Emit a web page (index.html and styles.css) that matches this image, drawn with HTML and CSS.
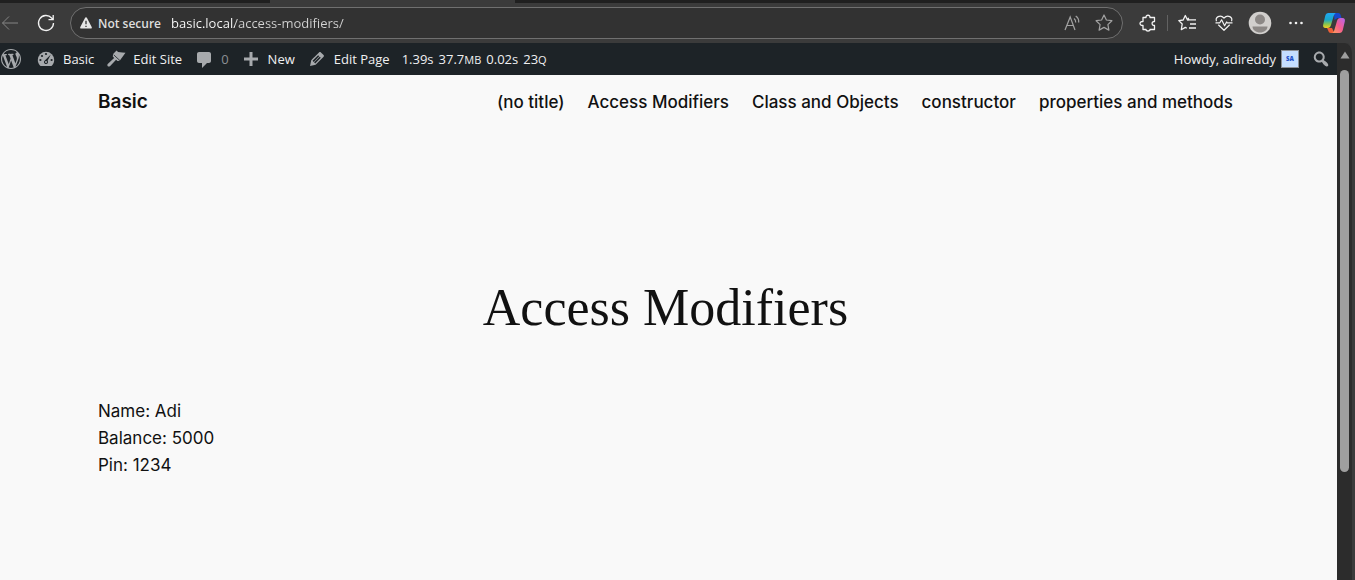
FILE: index.html
```html
<!DOCTYPE html>
<html lang="en">
<head>
<meta charset="utf-8">
<title>Access Modifiers – Basic</title>
<link rel="stylesheet" href="styles.css">
</head>
<body>
<div class="tabstrip"><span class="tab-active"></span></div>
<div class="toolbar">
  <button class="tool back" aria-label="Back"><svg width="20" height="20" viewBox="0 0 20 20"><path d="M18 10H2.500M9 3.500L2.500 10l6.500 6.500" stroke="#858585"/></svg></button>
  <button class="tool reload" aria-label="Refresh"><svg width="20" height="20" viewBox="0 0 20 20"><path d="M17.500 10A7.500 7.500 0 1 1 15.600 5l1.400 1.500M17.200 2v4.700h-4.700" stroke="#f2f2f2" stroke-width="1.300"/></svg></button>
  <div class="address">
    <button class="security"><svg width="14" height="14" viewBox="0 0 14 14"><path d="M7 1.200c.5 0 .8.300 1 .7l4.700 9c.4.800 0 1.700-1 1.700H2.300c-1 0-1.400-.9-1-1.700l4.700-9c.2-.4.500-.7 1-.7z" fill="#e6e6e6" stroke="none"/><path d="M7 4.700v3.600M7 9.700v1.200" stroke="#333" stroke-width="1.300"/></svg>Not secure</button>
    <input class="url" type="text" aria-label="Address" value="basic.local/access-modifiers/">
    <button class="tool read" aria-label="Read aloud"><svg width="20" height="20" viewBox="0 0 20 20"><path d="M3 17L8.200 4 13 17M5 12.500h6.300M12 5.500c1.300 1 1.800 2.400 1.700 4M13.700 3c2.300 1.500 3.300 3.700 3 6.500" stroke="#a2a2a2" stroke-width="1.200"/></svg></button>
    <button class="tool" aria-label="Add to favorites"><svg width="20" height="20" viewBox="0 0 20 20"><path d="M10 2l2.400 5 5.500.7-4 3.900 1 5.500-4.900-2.700-4.900 2.700 1-5.500-4-3.900 5.500-.7z" stroke="#a2a2a2" stroke-width="1.200" stroke-linejoin="round"/></svg></button>
  </div>
  <button class="tool extensions" aria-label="Extensions"><svg width="20" height="20" viewBox="0 0 20 20"><path d="M5 4.500h3c-.3-3 4.300-3 4 0h4.500v4c-3.200-.2-3.200 4.300 0 4v4H12c.2 2-4.200 2-4 0H5v-4c-4 .4-4-4.400 0-4z" stroke="#f2f2f2" stroke-width="1.300" stroke-linejoin="round"/></svg></button>
  <span class="divider"></span>
  <button class="tool" aria-label="Favorites"><svg width="20" height="20" viewBox="0 0 20 20"><path d="M11.500 6.800L9.500 7 7.300 2.500 5.200 7l-4.400.6L4.200 11l-.9 5.700 4-2.300 1.500.8M10 4.800l.9 2H18M12 11h6M11 15h7" stroke="#f2f2f2" stroke-width="1.300" stroke-linejoin="round"/></svg></button>
  <button class="tool" aria-label="Browser essentials"><svg width="20" height="20" viewBox="0 0 20 20"><path d="M2.500 8.200C1 4.500 6 .8 10 5c4-4.200 9-.5 7.500 3.200M4.300 11.700l5.700 5.600 5.700-5.600M1.500 9.800h4.300l1.800-3 3 6 2-3.800.7.800h5.200" stroke="#f2f2f2" stroke-width="1.200" stroke-linejoin="round"/></svg></button>
  <button class="tool profile" aria-label="Profile"><svg width="24" height="24" viewBox="0 0 24 24" stroke="none"><circle cx="12" cy="12" r="11.300" fill="#d1cfcd"/><circle cx="12" cy="8.500" r="5" fill="#8c8886"/><path d="M4.500 15.500h15c0 3.500-3.500 6-7.500 6s-7.500-2.500-7.500-6z" fill="#8c8886"/></svg></button>
  <button class="tool more" aria-label="Settings and more"><svg width="20" height="20" viewBox="0 0 20 20"><g fill="#f2f2f2"><circle cx="4.500" cy="10" r="1.300"/><circle cx="10" cy="10" r="1.300"/><circle cx="15.500" cy="10" r="1.300"/></g></svg></button>
  <button class="tool copilot" aria-label="Copilot"><svg width="24" height="24" viewBox="0 0 24 24" stroke="none">
    <defs>
      <linearGradient id="cool" x1="0" y1="0" x2="0" y2="1"><stop offset="0" stop-color="#20a7f5"/><stop offset=".45" stop-color="#19a7c9"/><stop offset=".75" stop-color="#8bc64a"/><stop offset="1" stop-color="#f5cf21"/></linearGradient>
      <linearGradient id="warm" x1="1" y1="0" x2="0" y2="1"><stop offset="0" stop-color="#b365ef"/><stop offset=".5" stop-color="#f55d91"/><stop offset="1" stop-color="#ff9e55"/></linearGradient>
    </defs>
    <path d="M12 2h4.200c1.600 0 2.200 1 2.600 2.400L19.500 7h-4l-3 2z" fill="#1748ce"/>
    <path d="M6.500 2H14c-1.500.5-2 2-2.500 3.600L9 14c-.6 1.900-1.500 3-3.500 3H3.600C1.400 17 .7 15.500 1.200 13.500l2-8.500c.5-2 1.500-3 3.300-3z" fill="url(#cool)"/>
    <path d="M5 17h5l2.500 5H9c-1.500 0-2.300-1-2.700-2.300z" fill="#ee6038"/>
    <path d="M17.500 22H10c1.500-.5 2-2 2.500-3.600L15 10c.6-1.900 1.500-3 3.500-3h1.900c2.200 0 2.900 1.500 2.400 3.500l-2 8.500c-.5 2-1.500 3-3.300 3z" fill="url(#warm)"/>
  </svg></button>
</div>
<div class="window">
  <div class="viewport">
    <nav class="adminbar" aria-label="Toolbar">
      <a class="item logo" href="#" aria-label="About WordPress"><svg width="20" height="20" viewBox="0 0 20 20"><path d="M20 10c0-5.510-4.490-10-10-10C4.480 0 0 4.490 0 10c0 5.520 4.480 10 10 10 5.510 0 10-4.480 10-10zM7.780 15.370L4.370 6.220c.55-.02 1.170-.08 1.170-.08.5-.06.44-1.130-.06-1.110 0 0-1.450.11-2.370.11-.18 0-.37 0-.58-.01C4.120 2.690 6.870 1.110 10 1.110c2.330 0 4.450.87 6.050 2.340-.68-.11-1.650.39-1.650 1.580 0 .74.45 1.360.9 2.100.35.610.55 1.360.55 2.460 0 1.490-1.400 5-1.400 5l-3.030-8.370c.54-.02.82-.17.82-.17.5-.05.44-1.250-.06-1.220 0 0-1.440.12-2.380.12-.87 0-2.330-.12-2.330-.12-.5-.03-.56 1.200-.06 1.220l.92.08 1.260 3.410zM17.410 10c.24-.64.74-1.870.43-4.250.7 1.290 1.050 2.710 1.050 4.250 0 3.290-1.730 6.240-4.400 7.780.97-2.590 1.940-5.200 2.920-7.780zM6.100 18.090C3.120 16.650 1.110 13.530 1.110 10c0-1.300.23-2.480.72-3.590C3.250 10.300 4.670 14.200 6.100 18.090zm4.030-6.630l2.580 6.980c-.86.29-1.760.45-2.710.45-.79 0-1.570-.11-2.290-.33.81-2.380 1.620-4.740 2.420-7.100z"/></svg></a>
      <a class="item" href="#"><svg width="20" height="20" viewBox="0 0 20 20"><path d="M4.500 17h11c1.700-1.500 2.700-3.600 2.700-6A8.200 8.200 0 0 0 1.800 11c0 2.400 1 4.500 2.700 6z"/><g fill="#1d2327"><circle cx="10" cy="5" r="1.100"/><circle cx="6" cy="7" r="1.100"/><circle cx="4.400" cy="11" r="1.100"/><circle cx="15.600" cy="11" r="1.100"/><path d="M14.800 5.500l-3.200 6.300c1 1.400.2 3.200-1.600 3.200-2 0-2.700-2.400-1.200-3.500z"/></g><circle cx="10" cy="13" r="1"/></svg>Basic</a>
      <a class="item" href="#"><svg width="20" height="20" viewBox="0 0 20 20"><path d="M10.500 1.500l1.600 1.600 4.200.4 3.200.3-5.800 8-2.300.2-1.300-1.300-5.900 6.200c-.8.800-1.700.9-2.400.3-.7-.7-.6-1.600.2-2.400l6.100-5.900L6.800 7.600l.3-2.700z"/><path d="M7.700 5.800l6.500 6" stroke="#1d2327" stroke-width=".8"/></svg>Edit Site</a>
      <a class="item muted" href="#" aria-label="0 comments"><svg width="20" height="20" viewBox="0 0 20 20"><path d="M5 3h10c1.100 0 2 .9 2 2v7c0 1.100-.9 2-2 2h-2l-5 5v-5H5c-1.100 0-2-.9-2-2V5c0-1.100.9-2 2-2z"/></svg>0</a>
      <a class="item" href="#"><svg width="20" height="20" viewBox="0 0 20 20"><path d="M17 8.500v3h-5.500V17h-3v-5.500H3v-3h5.500V3h3v5.500z"/></svg>New</a>
      <a class="item" href="#"><svg width="20" height="20" viewBox="0 0 20 20"><path d="M13.890 3.390l2.710 2.720c.46.46.42 1.240.03 1.640l-8.010 8.020-5.560 1.160 1.160-5.580s7.600-7.630 7.990-8.030c.39-.39 1.220-.39 1.680.07zm-2.730 2.790l-5.590 5.610 1.110 1.110 5.540-5.650zm-2.970 8.230l5.580-5.600-1.070-1.080-5.590 5.600z"/></svg>Edit Page</a>
      <a class="item stats" href="#"><span>1.39s</span><span>37.7<small>MB</small></span><span>0.02s</span><span>23<small>Q</small></span></a>
      <a class="item account" href="#">Howdy, adireddy<span class="avatar">SA</span></a>
      <button class="search" aria-label="Search"><svg width="20" height="20" viewBox="0 0 20 20"><path d="M12.140 4.180c1.870 1.870 2.110 4.750.72 6.890.12.1.22.21.36.31.2.16.47.36.81.59.34.24.56.39.66.47.42.31.73.57.94.78.32.32.6.65.84 1 .25.35.44.69.59 1.040.14.35.21.68.18 1-.02.32-.14.59-.36.81s-.49.34-.81.36c-.31.02-.65-.04-.99-.19-.35-.14-.7-.34-1.040-.59-.35-.24-.68-.52-1-.84-.21-.21-.47-.52-.77-.93-.1-.13-.25-.35-.47-.66-.22-.32-.4-.57-.56-.78-.16-.2-.29-.35-.44-.5-2.070 1.090-4.690.76-6.440-.98-2.140-2.150-2.140-5.640 0-7.780 2.150-2.150 5.630-2.150 7.780 0zm-1.410 6.360c1.360-1.370 1.360-3.580 0-4.950-1.370-1.370-3.590-1.370-4.950 0-1.370 1.370-1.370 3.580 0 4.950 1.360 1.370 3.580 1.370 4.950 0z"/></svg></button>
    </nav>
    <header class="site-header">
      <a class="site-title" href="#">Basic</a>
      <nav class="menu" aria-label="Pages">
        <a href="#">(no title)</a>
        <a href="#">Access Modifiers</a>
        <a href="#">Class and Objects</a>
        <a href="#">constructor</a>
        <a href="#">properties and methods</a>
      </nav>
    </header>
    <main class="content">
      <h1 class="page-title">Access Modifiers</h1>
      <p class="details">Name: Adi<br>Balance: 5000<br>Pin: 1234</p>
    </main>
  </div>
  <div class="scrollbar" aria-hidden="true">
    <svg width="10" height="8" viewBox="0 0 10 8"><path d="M5 .5L9.500 7.500h-9z" fill="#9f9f9f"/></svg>
    <span class="thumb"></span>
  </div>
</div>
</body>
</html>
```
FILE: styles.css
```css
* { box-sizing: border-box; }
body {
  margin: 0;
  min-height: 100vh;
  display: flex;
  flex-direction: column;
  background: #3b3b3b;
  font-family: "Open Sans", "Noto Sans", sans-serif;
}
button {
  padding: 0;
  border: 0;
  background: none;
  color: inherit;
  font: inherit;
}
a { color: inherit; text-decoration: none; }
svg { display: block; flex: none; }

.tabstrip { height: 3px; background: #202020; padding-left: 270px; }
.tab-active { display: block; width: 245px; height: 3px; background: #3b3b3b; }

.toolbar {
  height: 40px;
  display: flex;
  align-items: center;
  padding-right: 9px;
  background: #3b3b3b;
}
.tool { flex: none; }
.tool svg { fill: none; }
.reload { margin: 0 14px 0 16px; }
.toolbar > .tool + .tool { margin-left: 16px; }
.toolbar > .divider + .tool { margin-left: 10px; }
.toolbar > .profile.tool { margin-left: 14px; }
.toolbar > .more.tool { margin-left: 14px; }
.toolbar > .copilot.tool { margin-left: 16px; }
.extensions { margin: 0 9px 0 15px; }
.divider { width: 1px; height: 16px; background: #626262; }
.address {
  flex: 1;
  height: 32px;
  display: flex;
  align-items: center;
  gap: 12px;
  padding: 0 8px;
  border: 1px solid #707070;
  border-radius: 16px;
  background: #323232;
}
.security {
  display: flex;
  align-items: center;
  gap: 5px;
  margin-right: -2px;
  color: #dedede;
  font-size: 12px;
  font-weight: 600;
}
.url {
  flex: 1;
  min-width: 0;
  padding: 0;
  border: 0;
  outline: 0;
  background: linear-gradient(90deg, #fff 64px, #d4d4d4 64px);
  background-clip: text;
  color: transparent;
  font: 13px "Open Sans", "Noto Sans", sans-serif;
}

.window { flex: 1; display: flex; }
.viewport { flex: 1; min-width: 0; background: #f9f9f9; }

.adminbar {
  height: 32px;
  display: flex;
  align-items: center;
  gap: 12px;
  padding: 0 6px 0 1px;
  background: #1d2327;
  color: #f0f0f1;
  font-size: 13px;
}
.adminbar svg { fill: #a7aaad; }
.item { display: flex; align-items: center; gap: 6px; white-space: nowrap; }
.item { gap: 7px; }
.logo { margin-right: 3px; }
.muted { color: #8c8f94; }
.stats { gap: 5px; }
.stats small { font-size: 11px; }
.account { gap: 5px; margin-left: auto; }
.avatar {
  width: 18px;
  height: 18px;
  border: 1px solid #8c8f94;
  background: #c5deff;
  color: #1e50c8;
  font-size: 6px;
  font-weight: 800;
  line-height: 16px;
  text-align: center;
}

.site-header {
  display: flex;
  align-items: flex-start;
  justify-content: space-between;
  padding: 13px 104px 0 98px;
  color: #111;
  font-family: Inter, sans-serif;
}
.site-title { font-size: 19px; font-weight: 600; line-height: 27px; }
.menu { display: flex; gap: 23px; font-size: 17px; font-weight: 500; line-height: 29px; }

.content { padding: 0 104px 0 98px; color: #111; }
.page-title {
  margin: 158px 0 57px;
  font: 400 52px/66px "Liberation Serif", serif;
  text-align: center;
}
.details { margin: 0; font: 17px/27px Inter, sans-serif; }

.scrollbar {
  width: 18px;
  display: flex;
  flex-direction: column;
  align-items: center;
  gap: 11px;
  padding: 8px 0 0;
  border-right: 3px solid #3b3b3b;
  border-top-right-radius: 10px;
  background: #2c2c2c;
}
.thumb { width: 9px; height: 402px; border-radius: 5px; background: #9f9f9f; }
```
